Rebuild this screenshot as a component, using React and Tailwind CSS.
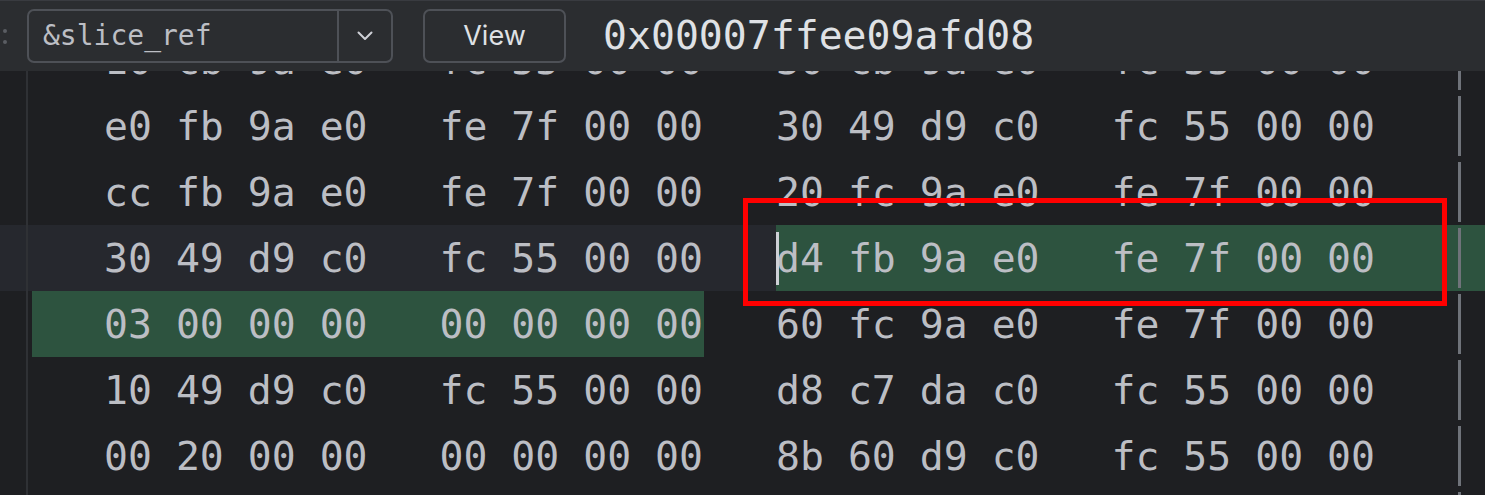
import React from 'react';

const mono = "font-['DejaVu_Sans_Mono',monospace]";

const rows = [
  { a: '10 cb 9a e0', b: 'fc 55 00 00', c: '30 cb 9a e0', d: 'fc 55 00 00' },
  { a: 'e0 fb 9a e0', b: 'fe 7f 00 00', c: '30 49 d9 c0', d: 'fc 55 00 00' },
  { a: 'cc fb 9a e0', b: 'fe 7f 00 00', c: '20 fc 9a e0', d: 'fe 7f 00 00' },
  { a: '30 49 d9 c0', b: 'fc 55 00 00', c: 'd4 fb 9a e0', d: 'fe 7f 00 00', current: true, rightSel: true },
  { a: '03 00 00 00', b: '00 00 00 00', c: '60 fc 9a e0', d: 'fe 7f 00 00', leftSel: true },
  { a: '10 49 d9 c0', b: 'fc 55 00 00', c: 'd8 c7 da c0', d: 'fc 55 00 00' },
  { a: '00 20 00 00', b: '00 00 00 00', c: '8b 60 d9 c0', d: 'fc 55 00 00' },
  { a: '', b: '', c: '', d: '' },
];

function HexRow({ row }) {
  return (
    <div className={`flex h-[66px] ${row.current ? 'bg-[#26282e]' : ''}`}>
      <div className="w-[26px] shrink-0" />
      <div className="w-[2px] shrink-0 bg-[#2f3135]" />
      <div className="w-[4px] shrink-0" />
      <div
        className={`w-[672px] shrink-0 pl-[72px] whitespace-pre text-[39.8px] leading-[66px] text-[#bcbec4] ${mono} ${
          row.leftSel ? 'bg-[#2d533f]' : ''
        }`}
      >
        {row.a ? `${row.a}   ${row.b}` : ''}
      </div>
      <div className="w-[72px] shrink-0" />
      <div className={`relative flex flex-1 ${row.rightSel ? 'bg-[#2d533f]' : ''}`}>
        {row.current && <span className="absolute left-0 top-[7px] h-[53px] w-[3px] bg-[#ced0d6]" />}
        <span className={`flex-1 whitespace-pre text-[39.8px] leading-[66px] text-[#bcbec4] ${mono}`}>
          {row.c ? `${row.c}   ${row.d}` : ''}
        </span>
        <div className="my-[3px] w-[3px] bg-[#6f737a]" />
        <div className="w-[24px]" />
      </div>
    </div>
  );
}

export default function App() {
  return (
    <div className="relative h-[495px] w-[1485px] overflow-hidden bg-[#1e1f22]">
      {/* Toolbar */}
      <div className="flex h-[71px] items-center border-t border-[#393b40] bg-[#2b2d30]">
        <div className="flex w-[27px] shrink-0 flex-col items-start gap-[7px] pl-[3px]">
          <span className="h-[4px] w-[4px] rounded-full bg-[#5a5d63]" />
          <span className="h-[4px] w-[4px] rounded-full bg-[#5a5d63]" />
        </div>
        <div className="flex h-[54px] w-[366px] shrink-0 rounded-[7px] border-2 border-[#4e5157]">
          <div className={`flex flex-1 items-center pl-[14px] text-[28px] text-[#bcbec4] ${mono}`}>&amp;slice_ref</div>
          <div className="w-[2px] bg-[#4e5157]" />
          <div className="flex w-[52px] items-center justify-center">
            <svg width="16" height="10" viewBox="0 0 16 10" fill="none">
              <path d="M1.5 1.5L8 8L14.5 1.5" stroke="#ced0d6" strokeWidth="2" strokeLinecap="round" strokeLinejoin="round" />
            </svg>
          </div>
        </div>
        <button className="ml-[30px] flex h-[54px] w-[143px] shrink-0 items-center justify-center rounded-[7px] border-2 border-[#4e5157] font-['Inter',sans-serif] text-[27px] text-[#dfe1e5]">
          View
        </button>
        <div className={`ml-[37px] text-[39.8px] text-[#dfe1e5] ${mono}`}>0x00007ffee09afd08</div>
      </div>

      {/* Hex view */}
      <div className="h-[424px] overflow-hidden">
        <div className="-mt-[44px]">
          {rows.map((row, i) => (
            <HexRow key={i} row={row} />
          ))}
        </div>
      </div>

      {/* annotation */}
      <div className="absolute left-[743px] top-[198px] h-[108px] w-[704px] border-[5px] border-[#ff0000]" />
    </div>
  );
}
